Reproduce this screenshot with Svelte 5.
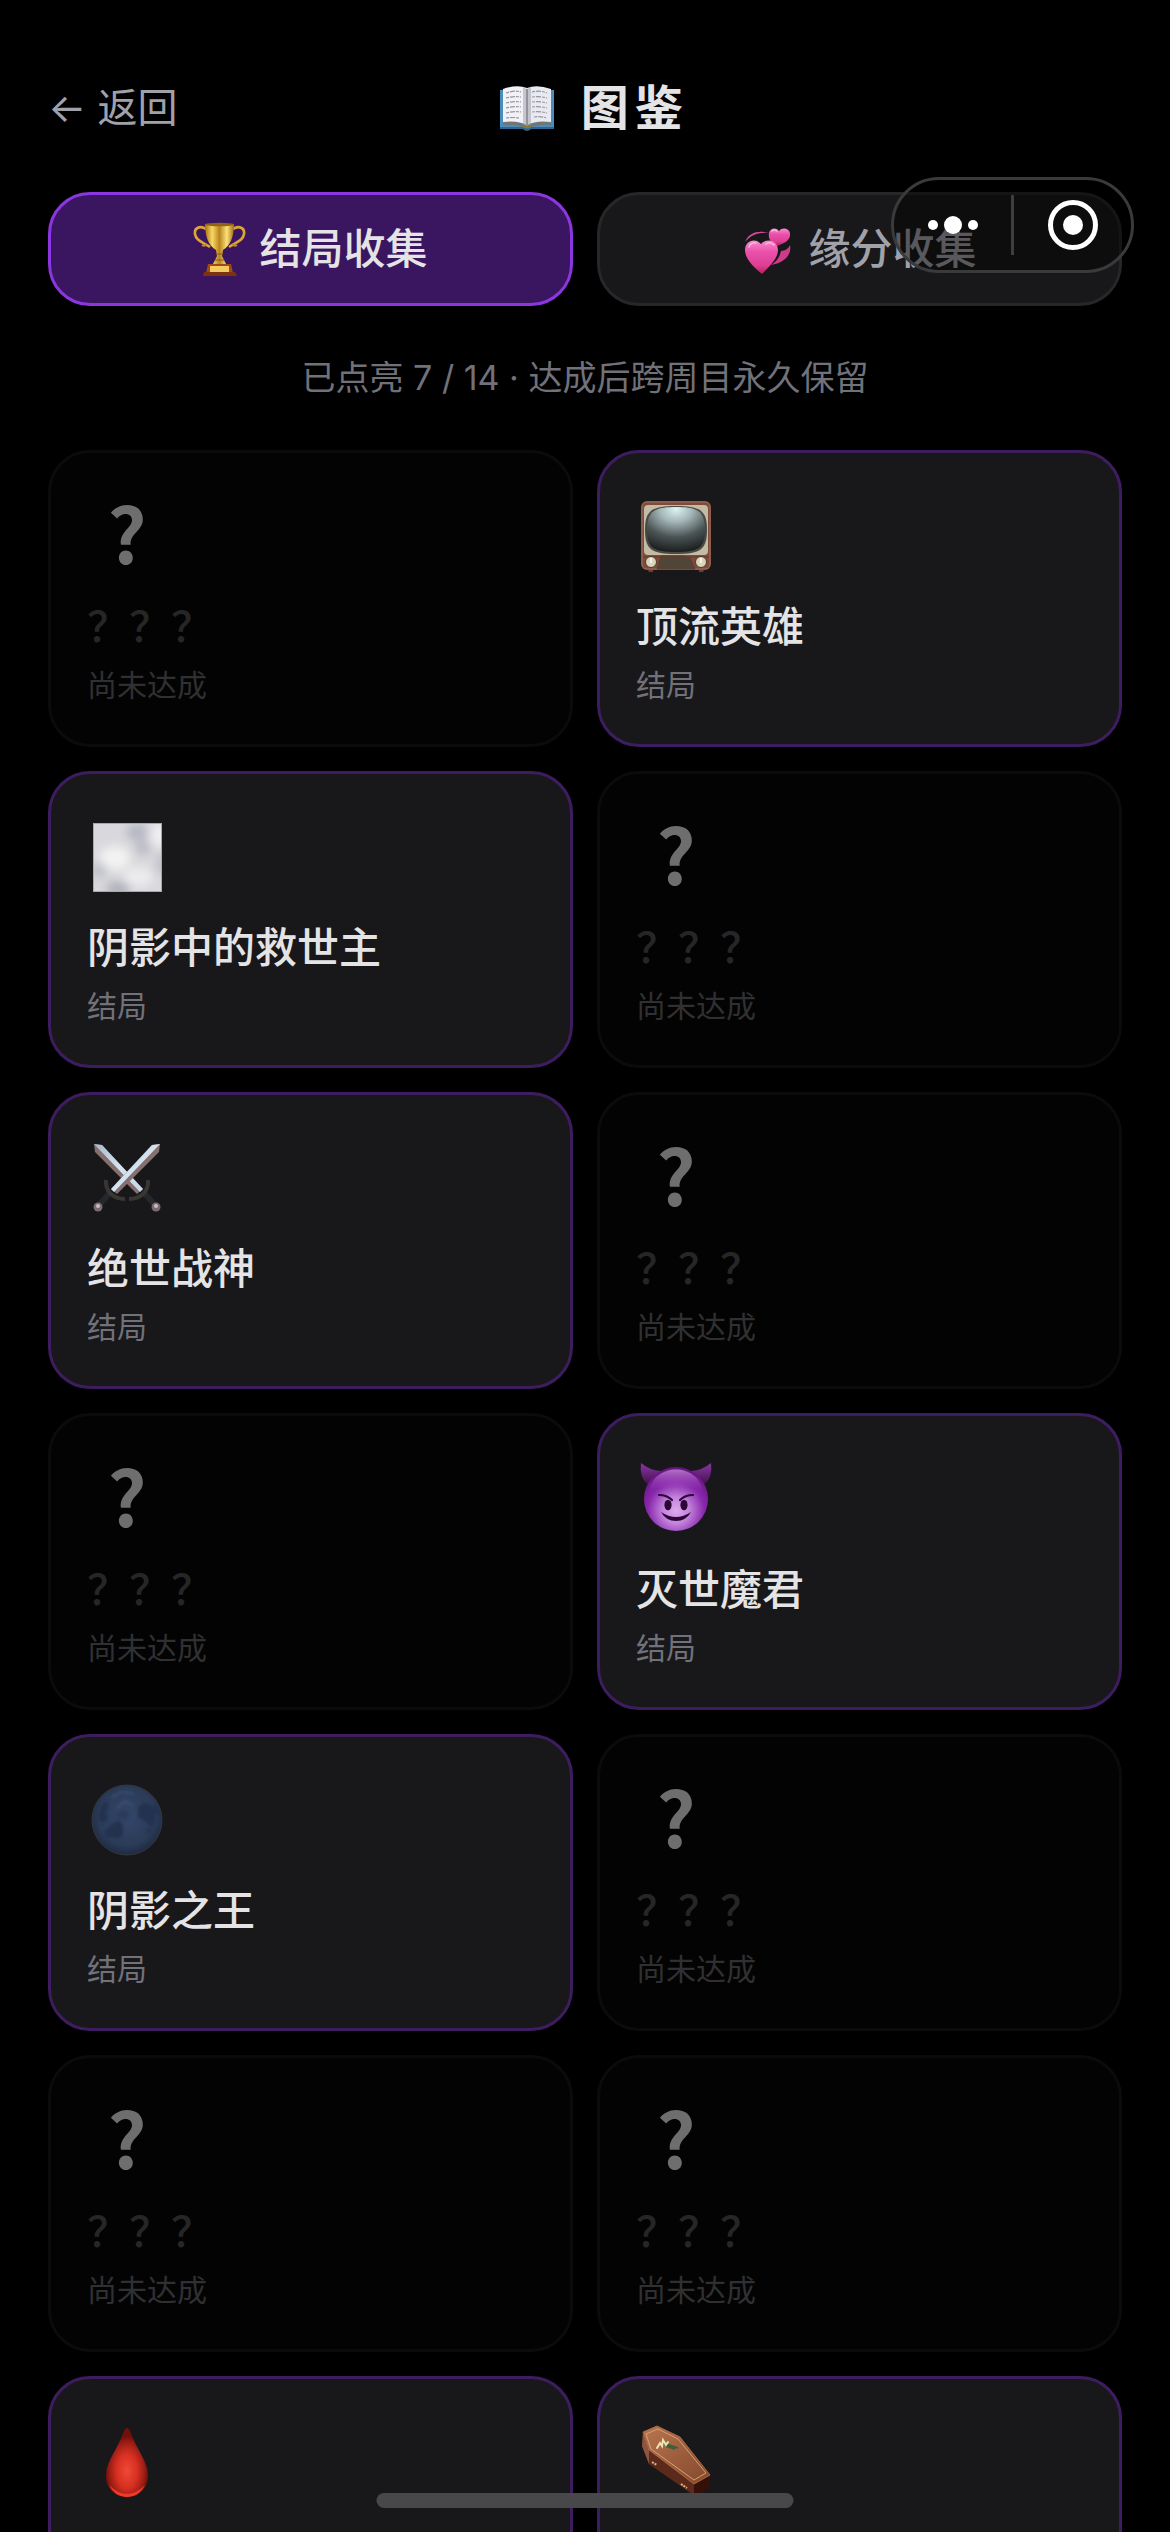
<script>
  let tab = $state("ending");

  const tabs = [
    { id: "ending", icon: "trophy", label: "结局收集" },
    { id: "bond", icon: "hearts", label: "缘分收集" },
  ];

  const total = 14;

  // locked endings only keep their place in the list
  const endings = [
    { locked: true },
    { icon: "tv", name: "顶流英雄" },
    { icon: "fog", name: "阴影中的救世主" },
    { locked: true },
    { icon: "swords", name: "绝世战神" },
    { locked: true },
    { locked: true },
    { icon: "devil", name: "灭世魔君" },
    { icon: "moon", name: "阴影之王" },
    { locked: true },
    { locked: true },
    { locked: true },
    { icon: "blood" },
    { icon: "coffin" },
  ];

  const lit = endings.filter((e) => !e.locked).length;
</script>

{#snippet tabIcon(name)}
  {#if name === "trophy"}
    <svg class="tab-icon" viewBox="0 0 54 54" aria-hidden="true">
      <defs>
        <linearGradient id="gold" x1="0" x2="1" y1="0" y2="0">
          <stop offset="0" stop-color="#a8700f" />
          <stop offset="0.25" stop-color="#f7d964" />
          <stop offset="0.5" stop-color="#b9831d" />
          <stop offset="0.75" stop-color="#fbe27a" />
          <stop offset="1" stop-color="#a86c10" />
        </linearGradient>
      </defs>
      <path d="M13 7C7 3 1 6 2 12c1 7 8 8 15 13M40 7c6-4 12-1 11 5-1 7-8 8-15 13" fill="none" stroke="#dba636" stroke-width="2.6" />
      <path d="M9 23q3 2 4-1M44 23q-3 2-4-1" fill="none" stroke="#c18a20" stroke-width="2" />
      <path d="M12 2h29c0 13-4 22-11 26l-1 6 4 8H20l4-8-1-6C16 24 12 15 12 2z" fill="url(#gold)" />
      <ellipse cx="26.5" cy="2.5" rx="14.5" ry="1.7" fill="#8f6415" />
      <path d="M23 32h7M22 38h9" stroke="#8a5a10" stroke-width="1.2" />
      <path d="M15 42h23l2 9H13z" fill="#9c4a17" />
      <path d="M17 44h19v6H17z" fill="#f3cb62" />
      <path d="M11 50h31l2 4H10z" fill="#7c3210" />
    </svg>
  {:else}
    <svg class="tab-icon" viewBox="0 0 54 54" aria-hidden="true">
      <defs>
        <linearGradient id="pink" x1="0" x2="0" y1="0" y2="1">
          <stop offset="0" stop-color="#f88ccb" />
          <stop offset="0.35" stop-color="#ea4fab" />
          <stop offset="0.75" stop-color="#dc3f92" />
          <stop offset="1" stop-color="#b51f5e" />
        </linearGradient>
      </defs>
      <path d="M3 20C7 10 17 8 28 11 17 10 9 13 3 20z" fill="#d64a9c" />
      <path d="M48 23c2 10-6 18-19 20 7-4 9-10 10-14 4 0 8-3 9-6z" fill="#cf3b8b" />
      <path d="M35 24C28 20 26 16 27 11c1-5 7-6 10-2 3-4 10-3 11 2 1 6-4 10-13 13z" fill="url(#pink)" />
      <path d="M20 52C10 44 3 36 3 28 3 19 13 15 19 22c6-7 17-3 17 6 0 8-8 16-16 24z" fill="url(#pink)" />
      <path d="M7 25q2-5 7-4M24 22q4-3 8 1M30 9q2-2 5 0" fill="none" stroke="#ffb3de" stroke-width="1.5" stroke-linecap="round" />
    </svg>
  {/if}
{/snippet}

{#snippet cardIcon(name)}
  <svg class="card-icon" viewBox="0 0 80 80" aria-hidden="true">
    {#if name === "tv"}
      <defs>
        <radialGradient id="screen" cx="0.5" cy="0.05" r="0.95">
          <stop offset="0" stop-color="#dff3f3" />
          <stop offset="0.3" stop-color="#a3b5b6" />
          <stop offset="0.65" stop-color="#4b5455" />
          <stop offset="1" stop-color="#1c1f1f" />
        </radialGradient>
      </defs>
      <path d="M11 71h6v4h-4zM63 71h6l-2 4h-4z" fill="#6f3f2d" />
      <rect x="5" y="4" width="70" height="69" rx="6" fill="#7d4c3c" />
      <rect x="6" y="5" width="68" height="67" rx="5" fill="none" stroke="#a06c58" />
      <rect x="8" y="8" width="64" height="50" rx="4" fill="#c3bba6" />
      <path d="M40 9c25 0 31 5 31 24S65 57 40 57 9 52 9 33 15 9 40 9z" fill="#494a42" />
      <path d="M40 10c23 0 29 5 29 23S63 55 40 55 11 51 11 33s6-23 29-23z" fill="url(#screen)" />
      <path d="M7 60h66M25 59l-4 13h38l-5-11-6-2z" fill="#4f4637" stroke="#673a2b" />
      <circle cx="15" cy="65" r="5.5" fill="#d9d5bd" stroke="#51372c" />
      <circle cx="65" cy="65" r="5.5" fill="#d9d5bd" stroke="#51372c" />
      <path d="M15 61v5M65 61v5" stroke="#fffdf0" stroke-width="1.5" />
    {:else if name === "fog"}
      <defs>
        <filter id="haze" x="-50%" y="-50%" width="200%" height="200%">
          <feGaussianBlur stdDeviation="5" />
        </filter>
        <clipPath id="fog-box"><rect x="6" y="5" width="69" height="69" /></clipPath>
      </defs>
      <g clip-path="url(#fog-box)">
        <rect x="6" y="5" width="69" height="69" fill="#d9d9dd" />
        <g filter="url(#haze)">
          <ellipse cx="50" cy="14" rx="11" ry="9" fill="#b7b7c3" />
          <ellipse cx="56" cy="30" rx="8" ry="8" fill="#bcbcc6" />
          <ellipse cx="12" cy="52" rx="9" ry="8" fill="#bfc0c7" />
          <ellipse cx="31" cy="71" rx="12" ry="8" fill="#b0b1ba" />
          <ellipse cx="75" cy="46" rx="6" ry="12" fill="#bfbfc7" />
          <ellipse cx="28" cy="40" rx="15" ry="12" fill="#f3f3f3" />
          <ellipse cx="51" cy="59" rx="15" ry="10" fill="#ececee" />
          <ellipse cx="72" cy="17" rx="8" ry="12" fill="#f1f1f3" />
        </g>
      </g>
      <rect x="6.5" y="5.5" width="68" height="68" fill="none" stroke="#a9a9ad" />
    {:else if name === "swords"}
      <defs>
        <linearGradient id="blade" x1="0" x2="1" y1="0" y2="1">
          <stop offset="0" stop-color="#a9b7c9" />
          <stop offset="0.5" stop-color="#d3e4f1" />
          <stop offset="1" stop-color="#c3d9ea" />
        </linearGradient>
      </defs>
      <path d="M7 5l8 1 41 44-6 5L8 13z" fill="#85706f" />
      <path d="M7 5l8 1 41 44-3 3z" fill="url(#blade)" />
      <path d="M56 53l12 13" stroke="#24282b" stroke-width="6" />
      <path d="M61 41c1 11-7 19-19 19" fill="none" stroke="#393734" stroke-width="4" />
      <path d="M73 5l-8 1-41 44 6 5 42-42z" fill="#85706f" />
      <path d="M73 5l-8 1-41 44 3 3z" fill="url(#blade)" />
      <path d="M24 53L12 66" stroke="#24282b" stroke-width="6" />
      <path d="M19 41c-1 11 7 19 19 19" fill="none" stroke="#393734" stroke-width="4" />
      <circle cx="11" cy="68" r="4.5" fill="#7b6b6c" />
      <circle cx="69" cy="68" r="4.5" fill="#7b6b6c" />
      <circle cx="11" cy="67" r="2" fill="#c5bfc9" />
      <circle cx="69" cy="67" r="2" fill="#c5bfc9" />
    {:else if name === "devil"}
      <defs>
        <radialGradient id="face" cx="0.5" cy="0.68" r="0.68">
          <stop offset="0" stop-color="#dfa9ee" />
          <stop offset="0.3" stop-color="#c384dc" />
          <stop offset="0.65" stop-color="#8827ac" />
          <stop offset="1" stop-color="#65117f" />
        </radialGradient>
        <linearGradient id="shine" x1="0" x2="0" y1="0" y2="1">
          <stop offset="0" stop-color="#c58ad6" stop-opacity="0.8" />
          <stop offset="1" stop-color="#a03fc2" stop-opacity="0" />
        </linearGradient>
        <linearGradient id="horn" x1="0" x2="0" y1="0" y2="1">
          <stop offset="0" stop-color="#8b36a6" />
          <stop offset="1" stop-color="#401049" />
        </linearGradient>
      </defs>
      <path d="M5 3q8 7 20 8L12 25Q3 17 5 3zM75 3q-8 7-20 8l13 14Q77 17 75 3z" fill="url(#horn)" />
      <circle cx="40" cy="39" r="32" fill="url(#face)" />
      <path d="M13 32C17 2 63 2 67 32 59 24 21 24 13 32z" fill="url(#shine)" />
      <path d="M23 35q8 0 13 5M57 35q-8 0-13 5" fill="none" stroke="#2d0539" stroke-width="2.2" stroke-linecap="round" />
      <ellipse cx="32" cy="45" rx="3.6" ry="5.3" fill="#2d0539" />
      <ellipse cx="48" cy="45" rx="3.6" ry="5.3" fill="#2d0539" />
      <path d="M25 52q15 10 30 0-5 9-15 9t-15-9z" fill="#2d0539" />
    {:else if name === "moon"}
      <defs>
        <radialGradient id="night" cx="0.5" cy="0.45" r="0.55">
          <stop offset="0" stop-color="#34476a" />
          <stop offset="0.75" stop-color="#2b3b58" />
          <stop offset="1" stop-color="#1e2b40" />
        </radialGradient>
        <filter id="soft"><feGaussianBlur stdDeviation="1.6" /></filter>
      </defs>
      <circle cx="40" cy="39" r="35" fill="url(#night)" stroke="#34383f" />
      <g fill="#243250" filter="url(#soft)">
        <path d="M14 25l5-5 3 5-3 5 2 9-6 3-4-6z" />
        <path d="M24 44l7-5 5 5v11l-6 3-8-3-5-4z" />
        <path d="M51 26l6-4 8 2 4 12-3 12-7-7-8-5z" />
        <circle cx="68" cy="29" r="4" />
        <circle cx="62" cy="50" r="2.5" />
        <circle cx="21" cy="54" r="3" />
        <path d="M30 32l8-3 6 4-5 6-7-1z" opacity="0.6" />
      </g>
      <path d="M25 17q8-9 22-4M30 27l8-7 9 5" fill="none" stroke="#4a608a" stroke-width="2" opacity="0.5" filter="url(#soft)" />
    {:else if name === "blood"}
      <defs>
        <radialGradient id="drop" cx="0.5" cy="0.62" r="0.5">
          <stop offset="0" stop-color="#ef4a38" />
          <stop offset="0.5" stop-color="#d72f21" />
          <stop offset="0.85" stop-color="#971c14" />
          <stop offset="1" stop-color="#731009" />
        </radialGradient>
      </defs>
      <path d="M40 5c2 0 3 3 5 8 7 17 16 26 16 40 0 12-9 21-21 21s-21-9-21-21c0-14 9-23 16-40 2-5 3-8 5-8z" fill="url(#drop)" />
      <path d="M22 62q18 18 36 0-6 12-18 12T22 62z" fill="#ef3b2b" />
    {:else if name === "coffin"}
      <defs>
        <linearGradient id="wood" x1="0" x2="1" y1="0" y2="1">
          <stop offset="0" stop-color="#b87550" />
          <stop offset="1" stop-color="#84482c" />
        </linearGradient>
      </defs>
      <path d="M7 9l-1 14 7 18 43 30 5 1V57L13 27z" fill="#5b2a1b" />
      <path d="M7 9l-1 14 7 18V27z" fill="#8a5541" />
      <path d="M58 60l16-8v12l-13 8-3-1z" fill="#351009" />
      <path d="M21 3L7 9l6 18 45 34 16-9-30-38z" fill="url(#wood)" stroke="#a8663f" />
      <path d="M22 6l-12 5 5 15 43 31 12-7-28-34z" fill="none" stroke="#d3a073" />
      <path d="M26 20l16 5M30 23l9 3" stroke="#3f6036" stroke-width="2" />
      <path d="M21 25l3-5 2 3 1-6 3 5 2-3" fill="none" stroke="#efe3b3" stroke-width="2" stroke-linecap="round" />
      <path d="M16 39l5 3M45 61l6 4" stroke="#dfb779" stroke-width="2" stroke-dasharray="2 1" />
    {/if}
  </svg>
{/snippet}

<main>
  <header>
    <button class="back">← 返回</button>
    <h1>
      <svg class="book" viewBox="0 0 60 60" aria-hidden="true">
        <path d="M3 12h54v39H34q-4 3-8 0H3z" fill="#4a8dbd" />
        <path d="M3 49h54v2H34q-4 3-8 0H3z" fill="#2a6796" />
        <path d="M6 45q15-3 24 3 9-6 24-3v2q-15-1-21 3h-6q-6-4-21-3z" fill="#77736a" />
        <path d="M6 11q14-5 24-1v37q-9-5-24-3z" fill="#f1f1f6" />
        <path d="M54 11q-14-5-24-1v37q9-5 24-3z" fill="#e9e9f1" />
        <path d="M26 9l4 2 4-2v37l-4 2-4-2z" fill="#aaaab8" opacity="0.6" />
        <path d="M30 11v36" stroke="#62626d" />
        <path d="M9 15q8-3 15-1M9 20q8-2 15-1M9 25q8-2 15-1M9 30q8-2 15-1M9 35q8-2 15-1M9 40q8-1 13 0M35 14q8-2 15 1M35 19q8-1 15 1M35 24q8-1 15 1M35 29q8-1 15 1M35 34q8-1 15 1M37 39q8-1 12 1" fill="none" stroke="#96969f" stroke-width="1.2" stroke-dasharray="3 1 5 1" />
        <path d="M26 48q4 3 8 0" fill="none" stroke="#8c7a20" stroke-width="2" />
      </svg>
      图鉴
    </h1>
    <span class="spacer"></span>
  </header>

  <nav>
    {#each tabs as t}
      <button class="tab" class:active={tab === t.id} onclick={() => (tab = t.id)}>
        {@render tabIcon(t.icon)}
        {t.label}
      </button>
    {/each}
  </nav>

  <p class="progress">已点亮 {lit} / {total} · 达成后跨周目永久保留</p>

  <section>
    {#each endings as e}
      <article class:locked={e.locked}>
        {#if e.locked}
          <div class="icon"><span class="mark">?</span></div>
          <h2>？？？</h2>
          <p>尚未达成</p>
        {:else}
          <div class="icon">{@render cardIcon(e.icon)}</div>
          {#if e.name}
            <h2>{e.name}</h2>
            <p>结局</p>
          {/if}
        {/if}
      </article>
    {/each}
  </section>
</main>

<div class="capsule">
  <button aria-label="更多">
    <svg width="60" height="60" viewBox="0 0 60 60" fill="#fff">
      <circle cx="10" cy="30" r="5" />
      <circle cx="30" cy="30" r="9" />
      <circle cx="50" cy="30" r="5" />
    </svg>
  </button>
  <button aria-label="关闭">
    <svg width="60" height="60" viewBox="0 0 60 60">
      <circle cx="30" cy="30" r="22.5" fill="none" stroke="#fff" stroke-width="5" />
      <circle cx="30" cy="30" r="10" fill="#fff" />
    </svg>
  </button>
</div>

<div class="home-bar"></div>

<style>
  :global(body) {
    background: #000;
  }
  main {
    box-sizing: border-box;
    height: 100vh;
    overflow-y: auto;
    scrollbar-width: none;
    padding: 66px 48px 0;
    background: #000;
    color: #e4e4e7;
    font-family: Inter, "Noto Sans CJK SC", sans-serif;
  }
  button {
    padding: 0;
    border: 0;
    background: none;
    color: inherit;
    font: inherit;
    cursor: pointer;
  }
  h1,
  h2,
  p {
    margin: 0;
  }
  header {
    display: flex;
    justify-content: space-between;
    align-items: center;
    height: 84px;
    margin-bottom: 42px;
  }
  .back {
    color: #a1a1aa;
    font-size: 40px;
    line-height: 60px;
  }
  h1 {
    display: flex;
    align-items: center;
    gap: 24px;
    font-size: 48px;
    font-weight: 600;
    line-height: 60px;
    letter-spacing: 6px;
  }
  .book {
    width: 60px;
    height: 60px;
  }
  .spacer {
    width: 114px;
  }
  nav {
    display: grid;
    grid-template-columns: 1fr 1fr;
    gap: 24px;
  }
  .tab {
    display: flex;
    justify-content: center;
    align-items: center;
    gap: 12px;
    box-sizing: border-box;
    height: 114px;
    border: 3px solid #27272a;
    border-radius: 42px;
    background: #18181b;
    color: #a1a1aa;
    font-size: 42px;
    font-weight: 500;
    line-height: 60px;
  }
  .tab.active {
    border-color: #8b36e0;
    background: #3b1660;
    color: #e4e4e7;
  }
  .tab-icon {
    width: 54px;
    height: 54px;
  }
  .progress {
    margin: 48px 0;
    color: #71717a;
    font-size: 34px;
    line-height: 48px;
    text-align: center;
  }
  section {
    display: grid;
    grid-template-columns: 1fr 1fr;
    gap: 24px;
    padding-bottom: 48px;
  }
  article {
    box-sizing: border-box;
    min-height: 297px;
    padding: 36px;
    border: 3px solid #3d1d60;
    border-radius: 42px;
    background: #18181b;
  }
  .icon {
    display: flex;
    justify-content: center;
    align-items: center;
    width: 80px;
    height: 96px;
    margin-bottom: 12px;
  }
  .card-icon {
    width: 80px;
    height: 80px;
  }
  .mark {
    align-self: flex-start;
    color: #6e6e6e;
    font-family: "Noto Sans CJK SC", sans-serif;
    font-size: 76px;
    font-weight: 700;
    line-height: 84px;
  }
  h2 {
    font-size: 42px;
    font-weight: 500;
    line-height: 60px;
  }
  article p {
    margin-top: 6px;
    color: #71717a;
    font-size: 30px;
    line-height: 45px;
  }
  .locked {
    border-color: #0b0b0c;
    background: #030303;
  }
  .locked h2 {
    color: #262627;
  }
  .locked p {
    color: #303032;
  }

  /* floats over the page, like the system's own menu */
  .capsule {
    position: fixed;
    top: 177px;
    right: 36px;
    display: flex;
    align-items: center;
    box-sizing: border-box;
    width: 243px;
    height: 96px;
    border: 3px solid #3a3a3b;
    border-radius: 48px;
    background: rgba(0, 0, 0, 0.45);
  }
  .capsule button {
    display: flex;
    flex: 1;
    justify-content: center;
    align-items: center;
    height: 60px;
  }
  .capsule button + button {
    border-left: 3px solid #3e3e40;
  }
  .home-bar {
    position: fixed;
    bottom: 24px;
    left: 50%;
    width: 417px;
    height: 15px;
    border-radius: 8px;
    background: #48484a;
    transform: translateX(-50%);
  }
</style>
